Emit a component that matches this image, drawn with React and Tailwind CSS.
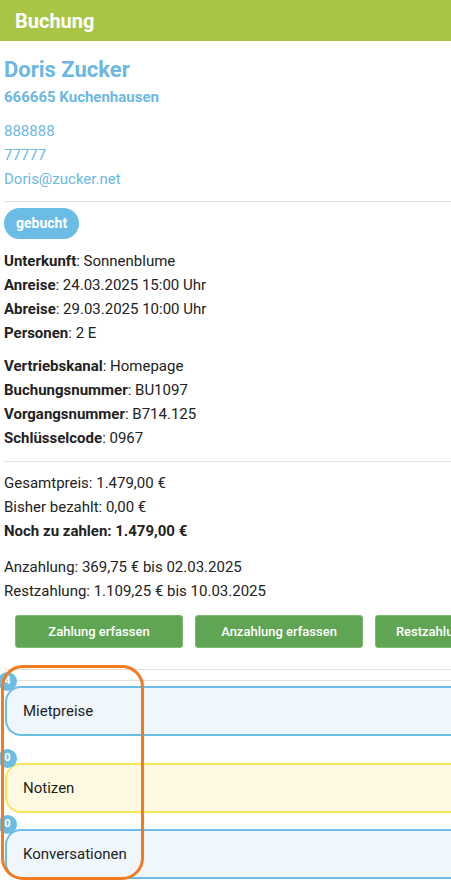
import React from "react";

const info1 = [
  ["Unterkunft", "Sonnenblume"],
  ["Anreise", "24.03.2025 15:00 Uhr"],
  ["Abreise", "29.03.2025 10:00 Uhr"],
  ["Personen", "2 E"],
];

const info2 = [
  ["Vertriebskanal", "Homepage"],
  ["Buchungsnummer", "BU1097"],
  ["Vorgangsnummer", "B714.125"],
  ["Schlüsselcode", "0967"],
];

function Line({ label, value }) {
  return (
    <div className="leading-[24px]">
      <span className="font-bold">{label}</span>: {value}
    </div>
  );
}

function Card({ title, count, yellow, className }) {
  return (
    <div className={"relative " + className}>
      <div
        className={
          "h-[50px] flex items-center pl-[16px] rounded-l-[16px] border-2 border-r-0 text-[15px] " +
          (yellow ? "bg-[#fefae2] border-[#fce354]" : "bg-[#eff7fd] border-[#6bbde5]")
        }
      >
        {title}
      </div>
      <div className="absolute left-[-7px] top-[-14px] w-[19px] h-[19px] rounded-full bg-[#6bbde5] text-white text-[11px] font-bold flex items-center justify-center">
        {count}
      </div>
    </div>
  );
}

export default function App() {
  return (
    <div
      className="w-[451px] h-[882px] overflow-hidden bg-white text-[#222] text-[15px] relative"
      style={{ fontFamily: "Roboto, 'Liberation Sans', sans-serif" }}
    >
      <div className="w-[640px]">
        <div className="h-[41px] bg-[#a8c545] flex items-center pl-[15px]">
          <h1 className="text-white font-bold text-[20px]">Buchung</h1>
        </div>

        <div className="pl-[4px]">
          <div className="mt-[15px] text-[#6cb8e3]">
            <div className="text-[22px] font-bold leading-[28px]">Doris Zucker</div>
            <div className="mt-[3px] text-[15px] font-bold leading-[20px]">666665 Kuchenhausen</div>
            <div className="mt-[12px] leading-[24px]">
              <div>888888</div>
              <div>77777</div>
              <div>Doris@zucker.net</div>
            </div>
          </div>

          <div className="mt-[10px] h-px bg-[#e0e0e0]" />

          <div className="mt-[6px] inline-flex items-center h-[31px] px-[12px] rounded-full bg-[#6bbde5] text-white text-[14px] font-bold">
            gebucht
          </div>

          <div className="mt-[10px]">
            {info1.map(([l, v]) => (
              <Line key={l} label={l} value={v} />
            ))}
          </div>
          <div className="mt-[9px]">
            {info2.map(([l, v]) => (
              <Line key={l} label={l} value={v} />
            ))}
          </div>

          <div className="mt-[11px] h-px bg-[#e0e0e0]" />

          <div className="mt-[9px] leading-[24px]">
            <div>Gesamtpreis: 1.479,00 €</div>
            <div>Bisher bezahlt: 0,00 €</div>
            <div className="font-bold">Noch zu zahlen: 1.479,00 €</div>
          </div>
          <div className="mt-[12px] leading-[24px]">
            <div>Anzahlung: 369,75 € bis 02.03.2025</div>
            <div>Restzahlung: 1.109,25 € bis 10.03.2025</div>
          </div>

          <div className="mt-[12px] pl-[11px] flex gap-[12px]">
            {["Zahlung erfassen", "Anzahlung erfassen", "Restzahlung erfassen"].map((t) => (
              <button
                key={t}
                className="w-[168px] h-[33px] rounded-[3px] bg-[#5fa553] border border-[#7cb872] text-white text-[13px] font-medium"
              >
                {t}
              </button>
            ))}
          </div>

          <div className="mt-[21px] h-px bg-[#e0e0e0]" />
          <div className="mt-[10px] h-px bg-[#e0e0e0]" />

          <div className="pl-[1px]">
            <Card title="Mietpreise" count="4" className="mt-[5px]" />
            <Card title="Notizen" count="0" yellow className="mt-[27px]" />
            <Card title="Konversationen" count="0" className="mt-[16px]" />
          </div>
        </div>
      </div>

      <div className="absolute left-[1px] top-[665px] w-[143px] h-[215px] rounded-[22px] border-[3px] border-[#f47a20] pointer-events-none" />
    </div>
  );
}
